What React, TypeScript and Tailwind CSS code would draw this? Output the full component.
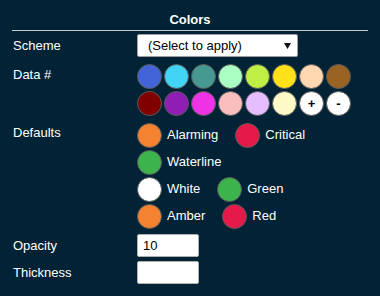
import React from "react";

const dataColors = [
  "#4363d8",
  "#42d4f4",
  "#469990",
  "#aaffc3",
  "#bfef45",
  "#ffe119",
  "#ffd8b1",
  "#9a6324",
  "#800000",
  "#911eb4",
  "#f032e6",
  "#fabebe",
  "#e6beff",
  "#fffac8",
];

const defaultRows = [
  [
    { label: "Alarming", color: "#f58231" },
    { label: "Critical", color: "#e6194b" },
  ],
  [{ label: "Waterline", color: "#3cb44b" }],
  [
    { label: "White", color: "#ffffff" },
    { label: "Green", color: "#3cb44b" },
  ],
  [
    { label: "Amber", color: "#f58231" },
    { label: "Red", color: "#e6194b" },
  ],
];

const Swatch = ({ color, children }: { color: string; children?: React.ReactNode }) => (
  <div
    className="flex h-[25px] w-[25px] items-center justify-center rounded-full border border-[#5a5a5a] text-[13px] font-bold leading-none text-black"
    style={{ backgroundColor: color }}
  >
    {children}
  </div>
);

const App = () => {
  return (
    <div
      className="h-[296px] w-[380px] overflow-hidden bg-[#022335] text-[13px] leading-[15px] text-white"
      style={{ fontFamily: '"Liberation Sans", Arial, sans-serif' }}
    >
      <div className="mx-3 border-b border-[#c8c8c8] pt-[12px] pb-[3px] text-center font-bold">
        Colors
      </div>

      <div className="mt-[3px] flex items-center">
        <div className="w-[137px] pl-[13px]">Scheme</div>
        <div className="flex h-[23px] w-[161px] items-center justify-between rounded-[2px] border border-[#a0a0a0] bg-white pl-[10px] pr-[6px] text-black">
          <span>(Select to apply)</span>
          <svg width="7" height="6" viewBox="0 0 7 6">
            <path d="M0 0 H7 L3.5 6 Z" fill="#111" />
          </svg>
        </div>
      </div>

      <div className="mt-[7px] flex items-start">
        <div className="w-[137px] pl-[13px] pt-[3px]">Data #</div>
        <div className="flex w-[214px] flex-wrap gap-[2px]">
          {dataColors.map((c) => (
            <Swatch key={c} color={c} />
          ))}
          <Swatch color="#ffffff">+</Swatch>
          <Swatch color="#ffffff">-</Swatch>
        </div>
      </div>

      <div className="mt-[7px] flex items-start">
        <div className="w-[137px] pl-[13px] pt-[2px]">Defaults</div>
        <div className="flex flex-col gap-[2px]">
          {defaultRows.map((row, i) => (
            <div key={i} className="flex gap-x-[17px]">
              {row.map((item) => (
                <div key={item.label} className="flex items-center gap-[5px]">
                  <Swatch color={item.color} />
                  <span className="-mt-[2px]">{item.label}</span>
                </div>
              ))}
            </div>
          ))}
        </div>
      </div>

      <div className="mt-[5px] flex items-center">
        <div className="w-[137px] pl-[13px]">Opacity</div>
        <div className="flex h-[23px] w-[62px] items-center rounded-[2px] border border-[#b0b0b0] bg-white pl-[5px] text-black">
          10
        </div>
      </div>

      <div className="mt-[4px] flex items-center">
        <div className="w-[137px] pl-[13px]">Thickness</div>
        <div className="h-[23px] w-[62px] rounded-[2px] border border-[#b0b0b0] bg-white" />
      </div>
    </div>
  );
};

export default App;
